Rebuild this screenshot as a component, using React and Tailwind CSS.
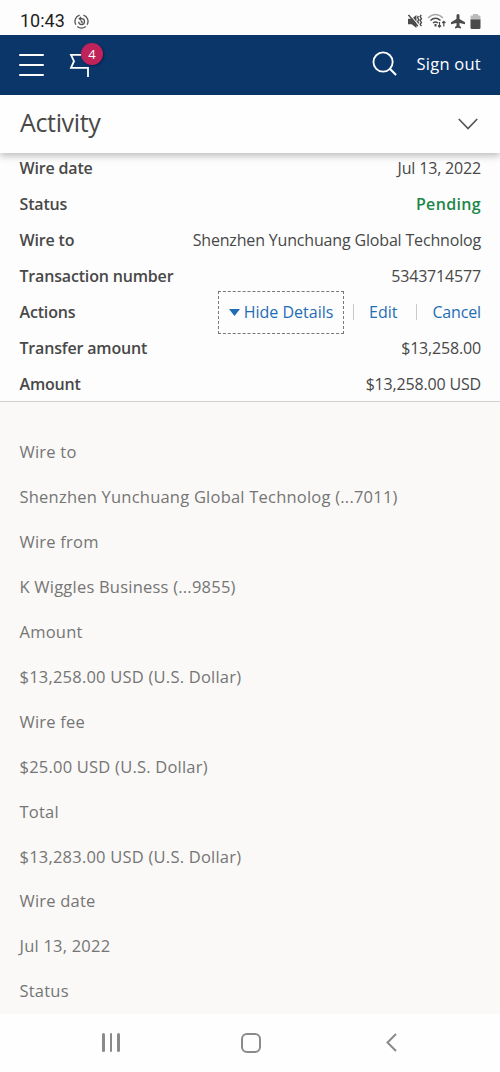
const rows = [
    { label: 'Wire date', value: 'Jul 13, 2022' },
    { label: 'Status', value: 'Pending', pending: true },
    { label: 'Wire to', value: 'Shenzhen Yunchuang Global Technolog' },
    { label: 'Transaction number', value: '5343714577' },
    { label: 'Actions', actions: true },
    { label: 'Transfer amount', value: '$13,258.00' },
    { label: 'Amount', value: '$13,258.00 USD' },
];

const details = [
    'Wire to',
    'Shenzhen Yunchuang Global Technolog (...7011)',
    'Wire from',
    'K Wiggles Business (...9855)',
    'Amount',
    '$13,258.00 USD (U.S. Dollar)',
    'Wire fee',
    '$25.00 USD (U.S. Dollar)',
    'Total',
    '$13,283.00 USD (U.S. Dollar)',
    'Wire date',
    'Jul 13, 2022',
    'Status',
];

function StatusBar() {
    return (
        <div className="h-[35px] shrink-0 flex items-center justify-between pl-[20px] pr-[19px] pt-[7px] bg-[#fdfdfd] text-[#1f1f1f]">
            <div className="flex items-center gap-[9px]">
                <span className="font-['Roboto'] text-[18px] leading-none">10:43</span>
                <svg width="15" height="15" viewBox="0 0 16 16" fill="none" stroke="#555" strokeWidth="1.4">
                    <path d="M6 1.3A7 7 0 0 0 2 11.5M3.5 13.3A7 7 0 0 0 12.5 13.3M14 11.5A7 7 0 0 0 10 1.3" />
                    <path d="M5 8.2A3.1 3.1 0 1 0 8 5H6M7.5 3.3L5.7 5L7.5 6.7M8 7V8.7H9.5" />
                </svg>
            </div>
            <div className="flex items-center gap-[4px] text-[#4a4a4a]">
                {/* Muted */}
                <svg width="15" height="15" viewBox="0 0 16 16" fill="currentColor">
                    <path d="M0 5H4L9 1V15L4 11H0Z" />
                    <path d="M1.500 0L11.500 12" stroke="#fdfdfd" strokeWidth="1.2" />
                    <path d="M.5 1L10.500 13" stroke="currentColor" strokeWidth="1.6" />
                    <path d="M11 2L10.3 4L11.5 6L10.3 8L11.5 10M14 1L13 3L14.3 5L13 7L14.3 9L13 11L14.3 13" fill="none" stroke="currentColor" strokeWidth="1.5" />
                </svg>
                <svg width="20" height="16" viewBox="0 0 20 16" fill="none" stroke="currentColor" strokeWidth="1.6">
                    <path d="M1 5Q8.500-2 16 5" stroke="#aaa" />
                    <path d="M3.500 7.500Q8.500 3 13.500 7.500M6 10Q8.500 8 11 10" />
                    <path d="M8.500 11V13.500" strokeWidth="2" />
                    <path d="M12.500 9V14M11 12.500L12.500 14.200L14 12.500M16.800 13.500V8.500M15.200 10L16.800 8.300L18.400 10" strokeWidth="1.2" />
                </svg>
                <svg width="14" height="15" viewBox="0 0 14 15" fill="currentColor">
                    <path d="M7 0C7.900 0 8.500.8 8.500 1.800V5L14 8.300V10.300L8.500 8.900V11.800L10 13V14.500L7 13.700L4 14.500V13L5.500 11.800V8.900L0 10.300V8.300L5.500 5V1.800C5.500.8 6.100 0 7 0Z" />
                </svg>
                <svg width="11" height="15" viewBox="0 0 11 15" className="ml-[1px]">
                    <path d="M3 0H8V1.500H9.500Q10.500 1.500 10.500 2.500V6H.5V2.500Q.5 1.500 1.500 1.500H3Z" fill="#bbb" />
                    <path d="M.5 5.500H10.500V13.500Q10.500 15 9 15H2Q.5 15 .5 13.500Z" fill="currentColor" />
                </svg>
            </div>
        </div>
    );
}

function Navbar() {
    return (
        <div className="h-[60px] shrink-0 bg-[#0b366a] flex items-center text-white">
            <div className="ml-[19px] w-[25px] h-[22px] flex flex-col justify-between">
                <span className="h-[2px] rounded-full bg-white" />
                <span className="h-[2px] rounded-full bg-white" />
                <span className="h-[2px] rounded-full bg-white" />
            </div>
            <div className="relative ml-[25px] w-[22px] h-[24px]">
                <svg width="22" height="24" viewBox="0 0 22 24" fill="none" stroke="#fff" strokeWidth="1.8">
                    <path d="M19 24V15M19 1.800H2L5 8.200L2 14.800H19.900" />
                </svg>
                <span className="absolute left-[12px] -top-[10px] size-[22px] rounded-full bg-[#c0235a] shadow-[1px_1px_2px_#06204a] flex items-center justify-center text-[13px] leading-none">4</span>
            </div>
            <svg className="ml-auto mb-[4px]" width="25" height="25" viewBox="0 0 26 26" fill="none" stroke="#fff" strokeWidth="1.9">
                <circle cx="11.500" cy="11.500" r="10" />
                <path d="M18.500 18.500L25 25" strokeWidth="2.2" />
            </svg>
            <span className="ml-[19px] mr-[19px] mb-[2px] text-[16.5px] tracking-[0.25px]">Sign out</span>
        </div>
    );
}

function Actions() {
    return (
        <div className="flex items-center text-[#1f6db5] tracking-normal">
            <span className="w-[126px] h-[43px] border border-dashed border-[#777] flex items-center justify-center gap-[4px] whitespace-nowrap">
                <svg width="11" height="7" viewBox="0 0 11 7" fill="currentColor">
                    <path d="M0 0H11L5.500 7Z" />
                </svg>
                Hide Details
            </span>
            <span className="ml-[9px] w-px h-[16px] bg-[#c8c8c8]" />
            <span className="ml-[15px]">Edit</span>
            <span className="ml-[19px] w-px h-[16px] bg-[#c8c8c8]" />
            <span className="ml-[15px] tracking-[-0.15px]">Cancel</span>
        </div>
    );
}

export default function App() {
    return (
        <div className="w-[500px] h-[1072px] overflow-hidden flex flex-col bg-[#fdfdfd] font-['Open_Sans',sans-serif]">
            <StatusBar />
            <Navbar />
            <div className="relative z-10 h-[58px] shrink-0 bg-[#fefefe] flex items-center justify-between pl-[20px] pr-[22px] pb-[3px] shadow-[0_3px_7px_rgba(0,0,0,0.25)]">
                <h1 className="text-[25px] leading-none tracking-[-0.35px] text-[#484848]">Activity</h1>
                <svg width="20" height="12" viewBox="0 0 20 12" fill="none" stroke="#555" strokeWidth="1.7" className="mt-[3px]">
                    <path d="M.8 1L10 10.500L19.200 1" />
                </svg>
            </div>

            <div className="-mt-[3px] h-[252px] shrink-0 border-b border-[#d0d0d0] text-[16px] tracking-[-0.17px] text-[#484848]">
                {rows.map(r => (
                    <div key={r.label} className="h-9 flex items-center justify-between pl-[19.5px] pr-[19px]">
                        <span className="font-semibold">{r.label}</span>
                        {r.actions ? <Actions /> : (
                            <span className={r.pending ? 'font-semibold tracking-[0.35px] text-[#1d8649]' : ''}>{r.value}</span>
                        )}
                    </div>
                ))}
            </div>

            <div className="grow bg-[#faf9f7] pt-[28px] text-[16.5px] tracking-[0.22px] text-[#757575]">
                {details.map((d, i) => (
                    <div key={i} className="h-[44.950px] flex items-center pl-[19.5px]">{d}</div>
                ))}
            </div>

            {/* Android navigation */}
            <div className="h-[58px] shrink-0 bg-[#fefefe] flex items-center justify-between pl-[102px] pr-[103px] pb-[1px] text-[#8a8a8a]">
                <div className="flex gap-[5px]">
                    <span className="w-[2.500px] h-[19px] bg-current rounded-full" />
                    <span className="w-[2.500px] h-[19px] bg-current rounded-full" />
                    <span className="w-[2.500px] h-[19px] bg-current rounded-full" />
                </div>
                <span className="size-[20px] mr-[4px] border-2 border-current rounded-[6px]" />
                <svg width="11" height="19" viewBox="0 0 11 19" fill="none" stroke="currentColor" strokeWidth="2">
                    <path d="M10 1L1.500 9.500L10 18" />
                </svg>
            </div>
        </div>
    );
}
